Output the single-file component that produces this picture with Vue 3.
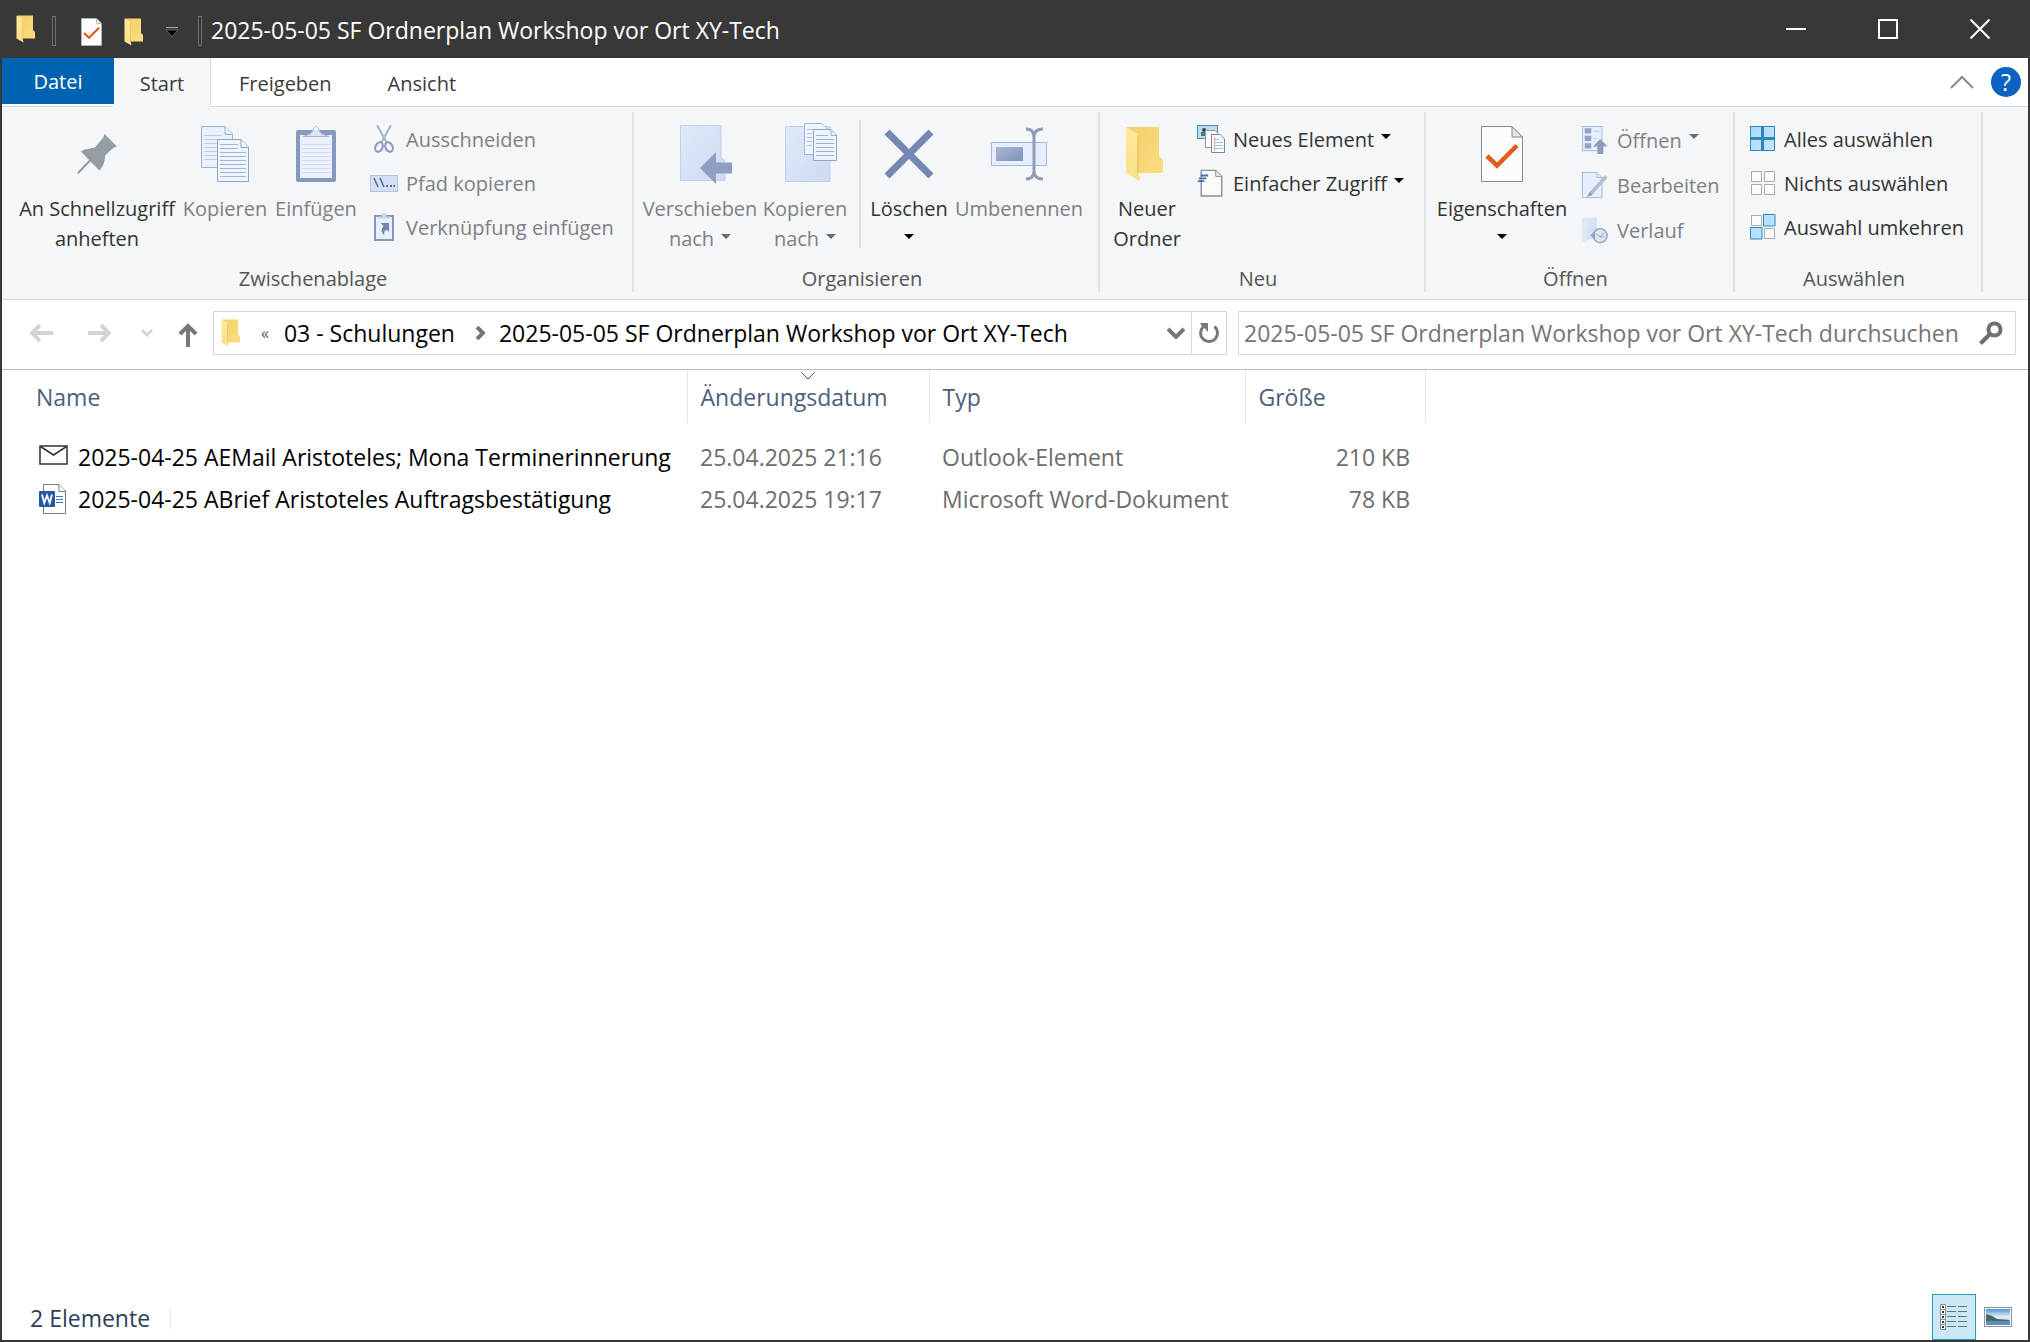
<script setup>
import { ref } from 'vue'

const folderTitle = '2025-05-05 SF Ordnerplan Workshop vor Ort XY-Tech'
const query = ref('')

const tabs = ['Start', 'Freigeben', 'Ansicht']

const groups = [
  {
    name: 'Zwischenablage',
    key: 'clipboard',
    big: [
      { lines: ['An Schnellzugriff', 'anheften'], icon: 'pin', key: 'pin' },
      { lines: ['Kopieren'], icon: 'copy', key: 'copy', off: true },
      { lines: ['Einfügen'], icon: 'paste', key: 'paste', off: true },
    ],
    small: [
      { text: 'Ausschneiden', icon: 'cut', off: true },
      { text: 'Pfad kopieren', icon: 'path', off: true },
      { text: 'Verknüpfung einfügen', icon: 'link', off: true },
    ],
  },
  {
    name: 'Organisieren',
    key: 'organize',
    big: [
      { lines: ['Verschieben', 'nach'], icon: 'move', key: 'move', off: true, menu: true },
      { lines: ['Kopieren', 'nach'], icon: 'copyto', key: 'copyto', off: true, menu: true },
      { lines: ['Löschen', ''], icon: 'delete', key: 'delete', menu: true, split: true },
      { lines: ['Umbenennen'], icon: 'rename', key: 'rename', off: true },
    ],
    small: [],
  },
  {
    name: 'Neu',
    key: 'new',
    big: [{ lines: ['Neuer', 'Ordner'], icon: 'folder', key: 'folder' }],
    small: [
      { text: 'Neues Element', icon: 'newitem', menu: true },
      { text: 'Einfacher Zugriff', icon: 'easy', menu: true },
    ],
  },
  {
    name: 'Öffnen',
    key: 'open',
    big: [{ lines: ['Eigenschaften', ''], icon: 'props', key: 'props', menu: true }],
    small: [
      { text: 'Öffnen', icon: 'openitem', off: true, menu: true },
      { text: 'Bearbeiten', icon: 'edit', off: true },
      { text: 'Verlauf', icon: 'history', off: true },
    ],
  },
  {
    name: 'Auswählen',
    key: 'select',
    big: [],
    small: [
      { text: 'Alles auswählen', icon: 'selall' },
      { text: 'Nichts auswählen', icon: 'selnone' },
      { text: 'Auswahl umkehren', icon: 'selinv' },
    ],
  },
]

const files = [
  { name: '2025-04-25 AEMail Aristoteles; Mona Terminerinnerung', date: '25.04.2025 21:16', type: 'Outlook-Element', size: '210 KB', icon: 'mail' },
  { name: '2025-04-25 ABrief Aristoteles Auftragsbestätigung', date: '25.04.2025 19:17', type: 'Microsoft Word-Dokument', size: '78 KB', icon: 'word' },
]
</script>

<template>
  <div class="window">
    <svg class="sprite" aria-hidden="true">
      <defs>
        <linearGradient id="gFolder" x1="0" x2="1" y1="0" y2="1">
          <stop offset="0" stop-color="#f3cf6b" /><stop offset="1" stop-color="#fbdc7e" />
        </linearGradient>
        <linearGradient id="gFlap" x1="0" x2="0" y1="0" y2="1">
          <stop offset="0" stop-color="#ffe9a0" /><stop offset="1" stop-color="#fbdf86" />
        </linearGradient>
        <linearGradient id="gPale" x1="0" x2="1" y1="0" y2="1">
          <stop offset="0" stop-color="#dfe9fa" /><stop offset="1" stop-color="#ccdaf1" />
        </linearGradient>
        <linearGradient id="gSteel" x1="0" x2="1" y1="0" y2="1">
          <stop offset="0" stop-color="#a9b8d3" /><stop offset="1" stop-color="#7f92b9" />
        </linearGradient>
        <linearGradient id="gBlue" x1="0" x2="1" y1="0" y2="1">
          <stop offset="0" stop-color="#a9dcfb" /><stop offset="1" stop-color="#c2e6fd" />
        </linearGradient>
        <linearGradient id="gSky" x1="0" x2="0" y1="0" y2="1">
          <stop offset="0" stop-color="#4f94d8" /><stop offset=".5" stop-color="#e4f1fb" /><stop offset="1" stop-color="#6fa5c8" />
        </linearGradient>
      </defs>
      <symbol id="i-folder" viewBox="0 0 38 56">
        <path d="M1 1H33V30L37 34V47H12Z" fill="url(#gFolder)" />
        <path d="M0 1L12 8V44L14 55L0 47Z" fill="url(#gFlap)" />
        <path d="M12 9V47" stroke="#e0b850" />
      </symbol>
      <symbol id="i-props" viewBox="0 0 42 56">
        <path d="M.5 .5H31L41.500 11V55.500H.5Z" fill="#fcfcfc" stroke="#8a8a8a" />
        <path d="M31 .5V11H41.500Z" fill="#e6e6e6" stroke="#8a8a8a" />
        <path d="M6 30L16 39.500L36 19.500" fill="none" stroke="#e25d1a" stroke-width="4.500" />
      </symbol>
      <symbol id="i-pin" viewBox="0 0 42 42">
        <path d="M28.500 1L41 13.500L38 14.500C35 17 31 20 29 23C29 28 27 34 23.500 37.500L14.500 28.500L3 40.500Q1 41.500 1.500 39L13 27L5 18.500C9 15.500 14 16 19 14.500C22 11 25 7 27 5Z" fill="#929da5" />
      </symbol>
      <symbol id="i-copy" viewBox="0 0 50 58">
        <g fill="#eaf1fc" stroke="#9db3d6">
          <path d="M1.500 1.500H25L32.500 9V42.500H1.500Z" /><path d="M25 1.500V9.500H32.500" />
        </g>
        <path d="M4 10.500H22M4 14.500H28M4 18.500H18M4 22.500H18M4 26.500H18M4 30.500H18M4 34.500H18" stroke="#bdcde6" />
        <g fill="#eef4fd" stroke="#8ea6cd">
          <path d="M17.500 14.500H41L48.500 22V56.500H17.500Z" /><path d="M41 14.500V22.500H48.500" />
        </g>
        <path d="M20 19.500H38M20 23.500H38M20 27.500H46M20 31.500H46M20 35.500H46M20 39.500H46M20 43.500H46M20 47.500H46M20 51.500H46" stroke="#a3b6d6" />
      </symbol>
      <symbol id="i-paste" viewBox="0 0 42 58">
        <rect x="1" y="5" width="40" height="52" rx="2" fill="#8598bd" />
        <rect x="5" y="10" width="32" height="43" fill="#eaf1fc" />
        <path d="M8 19.500H34M8 23.500H34M8 27.500H34M8 31.500H34M8 35.500H34M8 39.500H34M8 43.500H34M8 47.500H34" stroke="#d0dcee" />
        <path d="M8 11.500Q17 9 18 5Q21-2 24 5Q25 9 34 11.500Z" fill="#dbe4f2" stroke="#a9b6cd" />
        <circle cx="21" cy="3.500" r="1.500" fill="#fff" />
      </symbol>
      <symbol id="i-cut" viewBox="0 0 28 28">
        <path d="M7 0L17 18M21 0L11 18" stroke="#a5b5d0" stroke-width="2" />
        <ellipse cx="9" cy="22" rx="3.500" ry="5" transform="rotate(25 9 22)" fill="none" stroke="#8598bd" stroke-width="2" />
        <ellipse cx="19" cy="22" rx="3.500" ry="5" transform="rotate(-25 19 22)" fill="none" stroke="#8598bd" stroke-width="2" />
      </symbol>
      <symbol id="i-path" viewBox="0 0 28 28">
        <rect x=".5" y="6.500" width="27" height="16" fill="#d3e0f4" stroke="#b4c4e0" />
        <path d="M4 9L8 18M10 9L14 18" stroke="#55688c" stroke-width="1.500" />
        <path d="M16 17H18M20 17H22M23.500 17H25" stroke="#55688c" stroke-width="2" />
      </symbol>
      <symbol id="i-link" viewBox="0 0 28 28">
        <rect x="5" y="3" width="18" height="24" fill="#e8f0fc" stroke="#8598bd" stroke-width="2" />
        <path d="M8 5.500V3.500H12V.5H16V3.500H20V5.500Z" fill="#c9d4e6" />
        <path d="M19 10V19L16.500 16.500Q13 18.500 14.500 22.500Q9 18 13.500 13L10.500 10Z" fill="#7287b0" />
      </symbol>
      <symbol id="i-move" viewBox="0 0 52 62">
        <path d="M.5 2.500H41V34L45 38V57.500H.5Z" fill="url(#gPale)" stroke="#c3d0e8" />
        <path d="M20 45L36 29V39.500H52V50.500H36V61Z" fill="#8f9fc2" />
      </symbol>
      <symbol id="i-copyto" viewBox="0 0 52 62">
        <path d="M.5 3.500H45V58.500H.5Z" fill="url(#gPale)" stroke="#c3d0e8" />
        <path d="M19.500 .5H37L42.500 6V31.500H19.500Z" fill="#eef4fd" stroke="#a5b8d8" />
        <path d="M22 6.500H34M22 10.500H27M22 14.500H27M22 18.500H27M22 22.500H27" stroke="#b3c3de" />
        <path d="M28.500 6.500H46L51.500 12V37.500H28.500Z" fill="#eef4fd" stroke="#8ea6cd" />
        <path d="M46 6.500V12.500H51.500M31 12.500H43M31 16.500H49M31 20.500H49M31 24.500H49M31 28.500H49M31 32.500H49" fill="none" stroke="#9db1d3" />
      </symbol>
      <symbol id="i-delete" viewBox="0 0 50 50">
        <path d="M3 3L47 47M47 3L3 47" stroke="#7488b3" stroke-width="7" />
      </symbol>
      <symbol id="i-rename" viewBox="0 0 58 56">
        <rect x="1.500" y="16.500" width="55" height="23" fill="#e4eefc" stroke="#a6b8d8" />
        <rect x="6" y="21" width="27" height="14" fill="url(#gSteel)" />
        <path d="M36 3Q44 3 44 11V45Q44 53 36 53M53 3Q44 3 44 11M53 53Q44 53 44 45" fill="none" stroke="#909db5" stroke-width="3" />
      </symbol>
      <symbol id="i-newitem" viewBox="0 0 28 28">
        <rect x=".5" y=".5" width="20" height="13" fill="#b7def5" stroke="#4b8db8" />
        <circle cx="7" cy="5" r="2" fill="#3b4a4c" /><rect x="4" y="7" width="6" height="4" fill="#5d7a68" />
        <path d="M8.500 5.500H18L21.500 9V22.500H8.500Z" fill="#fdfdfd" stroke="#8f9499" />
        <path d="M14.500 9.500H23L27.500 14V27.500H14.500Z" fill="#fff" stroke="#7f858b" />
        <path d="M17 14.500H22M17 17.500H26M17 20.500H26M17 23.500H26" stroke="#9cc3e2" /><path d="M17.500 12V26" stroke="#e0a3a8" />
      </symbol>
      <symbol id="i-easy" viewBox="0 0 28 30">
        <path d="M3.500 1.500H19L25.500 8V29H3.500Z" fill="#fbfbfb" stroke="#8b9096" stroke-width="1.500" />
        <path d="M19 1.500V8H25.500" fill="#e5e5e5" stroke="#8b9096" />
        <path d="M3 7H11M1 10H9M0 13H7" stroke="#3b76b0" stroke-width="2" />
      </symbol>
      <symbol id="i-openitem" viewBox="0 0 28 30">
        <rect x=".5" y=".5" width="21" height="26" fill="#e4eefc" stroke="#a6b8d8" />
        <path d="M3 2.500H10V8H3ZM3 10.500H10V16H3ZM3 18.500H10V24H3Z" fill="#93a4c6" />
        <path d="M12 5.500H19M12 13.500H16" stroke="#bccbe4" />
        <path d="M19.500 14L27.500 22H23V30H16.500V22H12Z" fill="#8b9cbf" />
      </symbol>
      <symbol id="i-edit" viewBox="0 0 28 30">
        <path d="M.5 1.500H16L21.500 7V28.500H.5Z" fill="#e6effc" stroke="#a6b8d8" /><path d="M16 1.500V7H21.500" fill="none" stroke="#a6b8d8" />
        <path d="M26 6L8 26" stroke="#b2bfd5" stroke-width="4" /><path d="M9 22L5 28L11 25.500Z" fill="#8b9cbf" />
      </symbol>
      <symbol id="i-history" viewBox="0 0 28 30">
        <path d="M0 2H16V25H8L0 28Z" fill="url(#gPale)" /><path d="M0 2L5 5V29L0 26Z" fill="#dce7f8" />
        <circle cx="19.500" cy="21" r="7.500" fill="#dbe5f4" stroke="#8fa0c2" stroke-width="1.500" />
        <path d="M15 19L19.500 22L24 18M19 22.500H24" fill="none" stroke="#8fa0c2" /><path d="M9 21L14 17V25Z" fill="#8fa0c2" />
      </symbol>
      <symbol id="i-selall" viewBox="0 0 28 28">
        <rect x="2" y="1" width="25" height="25" fill="#2f86bd" />
        <path d="M3 2H13V12H3ZM16 2H26V12H16ZM3 15H13V25H3ZM16 15H26V25H16Z" fill="url(#gBlue)" />
      </symbol>
      <symbol id="i-selnone" viewBox="0 0 28 28">
        <path d="M3.500 2.500H13.500V12.500H3.500ZM16.500 2.500H26.500V12.500H16.500ZM3.500 15.500H13.500V25.500H3.500ZM16.500 15.500H26.500V25.500H16.500Z" fill="#fcfcfc" stroke="#ababab" />
      </symbol>
      <symbol id="i-selinv" viewBox="0 0 28 28">
        <path d="M3.500 2.500H13.500V12.500H3.500ZM16.500 15.500H26.500V25.500H16.500Z" fill="#fcfcfc" stroke="#ababab" />
        <path d="M15.500 1.500H27V13H15.500ZM2.500 14.500H14V26H2.500Z" fill="url(#gBlue)" stroke="#2f86bd" />
      </symbol>
      <symbol id="i-mail" viewBox="0 0 30 30">
        <rect x="1" y="4" width="27" height="18" fill="#fff" stroke="#333" stroke-width="1.500" />
        <path d="M1.500 4.500L14.500 13L27.500 4.500" fill="none" stroke="#333" stroke-width="1.500" />
      </symbol>
      <symbol id="i-word" viewBox="0 0 30 30">
        <path d="M4.500 .5H20L26.500 7V29.500H4.500Z" fill="#fff" stroke="#7d7d7d" />
        <path d="M20 .5V7.500H26.500" fill="#fff" stroke="#6b8468" />
        <path d="M17 12.500H24M17 15.500H24M17 18.500H24" stroke="#3f78bd" />
        <rect x="0" y="7" width="16" height="16" rx="1" fill="#2457a4" />
        <path d="M3 10.500L5.300 19L8 11.500L10.700 19L13 10.500" fill="none" stroke="#fff" stroke-width="1.800" />
      </symbol>
    </svg>

    <header class="titlebar">
      <svg class="folder-icon app"><use href="#i-folder" /></svg>
      <span class="bar"></span>
      <button class="quick doc" aria-label="Eigenschaften"><svg><use href="#i-props" /></svg></button>
      <button class="quick" aria-label="Neuer Ordner"><svg class="folder-icon"><use href="#i-folder" /></svg></button>
      <button class="quick more" aria-label="Anpassen">
        <svg viewBox="0 0 12 10"><path d="M0 .5H12" stroke="#aaa" /><path d="M0 3H12L6 9.500Z" fill="#000" stroke="#aaa" stroke-width=".5" /></svg>
      </button>
      <span class="bar"></span>
      <h1>{{ folderTitle }}</h1>
      <div class="controls">
        <button aria-label="Minimieren"><svg viewBox="0 0 20 20"><path d="M0 10H20" /></svg></button>
        <button aria-label="Maximieren"><svg viewBox="0 0 20 20"><path d="M1 1H19V19H1Z" /></svg></button>
        <button aria-label="Schließen"><svg viewBox="0 0 20 20"><path d="M.5 .5L19.500 19.500M19.500 .5L.5 19.500" /></svg></button>
      </div>
    </header>

    <nav class="tabs">
      <button class="file-tab">Datei</button>
      <button v-for="(t, i) in tabs" :key="t" class="tab" :class="{ active: i === 0 }">{{ t }}</button>
      <span class="spacer"></span>
      <button class="collapse" aria-label="Menüband minimieren"><svg viewBox="0 0 24 14"><path d="M1 13L12 2L23 13" /></svg></button>
      <button class="help" aria-label="Hilfe">?</button>
    </nav>

    <section class="ribbon">
      <div v-for="g in groups" :key="g.key" class="group" :class="'g-' + g.key">
        <div class="commands">
          <template v-for="b in g.big" :key="b.key">
            <span v-if="b.split" class="split"></span>
            <button class="big" :class="['b-' + b.key, { off: b.off }]">
              <span class="pic"><svg><use :href="'#i-' + b.icon" /></svg></span>
              <span>{{ b.lines[0] }}</span>
              <span v-if="b.lines.length > 1" class="second">{{ b.lines[1] }}<i v-if="b.menu" class="caret"></i></span>
            </button>
          </template>
          <div v-if="g.small.length" class="column">
            <button v-for="s in g.small" :key="s.text" class="small" :class="{ off: s.off }">
              <svg><use :href="'#i-' + s.icon" /></svg>
              <span>{{ s.text }}</span>
              <i v-if="s.menu" class="caret"></i>
            </button>
          </div>
        </div>
        <div class="caption">{{ g.name }}</div>
      </div>
    </section>

    <section class="navbar">
      <div class="history">
        <button aria-label="Zurück"><svg class="arrow" viewBox="0 0 24 20"><path d="M23 10H3M10 2L2 10L10 18" /></svg></button>
        <button aria-label="Vorwärts"><svg class="arrow" viewBox="0 0 24 20"><path d="M1 10H21M14 2L22 10L14 18" /></svg></button>
        <button class="recent" aria-label="Zuletzt besucht"><svg viewBox="0 0 12 8"><path d="M1 1L6 6L11 1" /></svg></button>
        <button class="up" aria-label="Nach oben"><svg viewBox="0 0 20 24"><path d="M10 24V4M2 11L10 3L18 11" /></svg></button>
      </div>
      <div class="address">
        <svg class="folder-icon"><use href="#i-folder" /></svg>
        <button class="crumb-more">«</button>
        <button>03 - Schulungen</button>
        <svg class="sep" viewBox="0 0 10 14"><path d="M2 1L8 7L2 13" /></svg>
        <button>{{ folderTitle }}</button>
        <span class="spacer"></span>
        <button class="drop" aria-label="Vorherige Orte"><svg viewBox="0 0 18 12"><path d="M1 2L9 10L17 2" /></svg></button>
        <button class="refresh" aria-label="Aktualisieren">
          <svg viewBox="0 0 22 22"><path d="M16.500 4.500A8.500 8.500 0 1 1 5 5" fill="none" stroke="#777" stroke-width="3" /><path d="M2 1H10V10L7.500 7L4 4.500Z" fill="#777" /></svg>
        </button>
      </div>
      <label class="search">
        <input v-model="query" type="text" :placeholder="folderTitle + ' durchsuchen'" aria-label="Ordner durchsuchen" />
        <svg viewBox="0 0 24 24"><circle cx="15.500" cy="8.500" r="6" /><path d="M11 13L1.500 22.500" /></svg>
      </label>
    </section>

    <main class="content">
      <table>
        <colgroup><col class="c-name" /><col class="c-date" /><col class="c-type" /><col class="c-size" /><col /></colgroup>
        <thead>
          <tr>
            <th class="name">Name</th>
            <th>Änderungsdatum<svg class="sort" viewBox="0 0 14 8"><path d="M.5 .5L7 7L13.500 .5" /></svg></th>
            <th>Typ</th>
            <th>Größe</th>
            <th class="rest"></th>
          </tr>
        </thead>
        <tbody>
          <tr v-for="f in files" :key="f.name">
            <td class="name"><div><svg><use :href="'#i-' + f.icon" /></svg>{{ f.name }}</div></td>
            <td>{{ f.date }}</td>
            <td>{{ f.type }}</td>
            <td class="size">{{ f.size }}</td>
            <td class="rest"></td>
          </tr>
        </tbody>
      </table>
    </main>

    <footer class="status">
      <span class="count">{{ files.length }} Elemente</span>
      <span class="spacer"></span>
      <button class="view active" aria-label="Details">
        <svg viewBox="0 0 28 28">
          <path d="M.5 1.500H5.500V26.500H.5ZM.5 6.500H5.500M.5 11.500H5.500M.5 16.500H5.500M.5 21.500H5.500" fill="#fff" stroke="#8b8b8b" />
          <path d="M2 4H4M2 9H4M2 14H4M2 19H4M2 24H4" stroke="#333" stroke-width="2" />
          <path d="M7 3.500H16M18 3.500H27M7 8.500H16M18 8.500H27M7 13.500H16M18 13.500H27M7 18.500H16M18 18.500H27M7 23.500H16M18 23.500H27" stroke="#5f7483" />
        </svg>
      </button>
      <button class="view" aria-label="Große Symbole">
        <svg viewBox="0 0 28 22">
          <rect x=".5" y="1.500" width="27" height="19" fill="#fff" stroke="#8790a0" />
          <rect x="2" y="3" width="24" height="16" fill="url(#gSky)" />
          <path d="M2 8Q8 9 13 13L25 14L26 15H2Z" fill="#3d6b62" /><path d="M2 15H26V19H2Z" fill="#5b8fb5" />
        </svg>
      </button>
    </footer>
  </div>
</template>

<style>
body {
  margin: 0;
}
</style>

<style scoped>
.window {
  box-sizing: border-box;
  min-height: 100vh;
  display: flex;
  flex-direction: column;
  border: solid #383838;
  border-width: 0 2px 2px;
  background: #fff;
  color: #000;
  font: 23px/30px "Open Sans", "Noto Sans", sans-serif;
  white-space: nowrap;
}
.sprite {
  position: absolute;
  width: 0;
  height: 0;
}
button {
  font: inherit;
  color: inherit;
  background: none;
  border: 0;
  padding: 0;
  margin: 0;
}
svg {
  display: block;
  flex: none;
}
.spacer {
  flex: 1;
}
.folder-icon {
  width: 20px;
  height: 28px;
}

.titlebar {
  display: flex;
  align-items: center;
  height: 58px;
  padding: 0 2px 0 14px;
  background: #383838;
  color: #fff;
}
.bar {
  box-sizing: border-box;
  width: 4px;
  height: 30px;
  margin: 4px 0 0 16px;
  border: 1px solid #6e6e6e;
}
.quick {
  margin: 6px 0 0 22px;
}
.quick.doc {
  margin-left: 25px;
}
.doc svg {
  width: 21px;
  height: 28px;
}
.more svg {
  width: 12px;
  height: 10px;
}
.more + .bar {
  margin-left: 20px;
}
h1 {
  margin: 2px 0 0 9px;
  font-size: 23px;
  font-weight: 400;
}
.controls {
  display: flex;
  align-self: stretch;
  margin-left: auto;
}
.controls button {
  display: grid;
  place-items: center;
  width: 92px;
}
.controls svg {
  width: 20px;
  height: 20px;
  fill: none;
  stroke: #fff;
  stroke-width: 2;
}

.tabs {
  display: flex;
  align-items: center;
  height: 48px;
  border-bottom: 1px solid #d9dadc;
  font-size: 20px;
  color: #3b3b3b;
}
.tabs button {
  align-self: stretch;
}
.file-tab {
  width: 112px;
  margin-bottom: 2px;
  padding-top: 2px;
  background: #0063b1;
  color: #fff;
}
.tab {
  padding: 3px 28px 0;
}
.tab.active {
  box-sizing: border-box;
  width: 97px;
  margin-bottom: -1px;
  padding: 2px 0 0;
  background: #f5f6f7;
  border-right: 1px solid #d9dadc;
}
.tabs .collapse {
  margin-right: 17px;
}
.collapse svg {
  width: 24px;
  height: 14px;
  fill: none;
  stroke: #8a8a8a;
  stroke-width: 2;
}
.tabs .help {
  align-self: center;
  width: 30px;
  height: 30px;
  margin-right: 7px;
  border-radius: 50%;
  background: #0a63c0;
  color: #fff;
  font-size: 23px;
}

.ribbon {
  display: flex;
  padding: 5px 0 7px;
  background: #f5f6f7;
  border-bottom: 1px solid #d9dadc;
  font-size: 20px;
  color: #333;
}
.group {
  box-sizing: border-box;
  display: flex;
  flex-direction: column;
  height: 180px;
  border-right: 2px solid #e1e2e4;
}
.g-clipboard { width: 632px; }
.g-organize { width: 466px; }
.g-new { width: 326px; }
.g-open { width: 309px; }
.g-select { width: 248px; }
.commands {
  display: flex;
  flex: 1;
  padding-left: 5px;
}
.g-clipboard .commands {
  padding-left: 12px;
}
.g-organize .commands {
  padding-left: 9px;
}
.caption {
  height: 28px;
  padding-right: 8px;
  line-height: 30px;
  text-align: center;
  color: #555;
}
.off {
  color: #7f8083;
}
.big {
  display: flex;
  flex-direction: column;
  align-items: center;
  padding-top: 6px;
}
.pic {
  display: grid;
  place-items: center;
  height: 72px;
  margin-bottom: 4px;
}
.second {
  display: flex;
  align-items: center;
  gap: 7px;
  min-height: 30px;
}
.caret {
  flex: none;
  width: 0;
  height: 0;
  margin-bottom: 6px;
  border: solid transparent;
  border-width: 5px 5px 0;
  border-top-color: #000;
}
.off .caret {
  border-top-color: #6a6b6e;
}
.b-pin { width: 166px; }
.b-copy { width: 90px; }
.b-paste { width: 92px; }
.b-move { width: 114px; }
.b-copyto { width: 96px; }
.b-delete { width: 92px; }
.b-rename { width: 128px; }
.b-folder { width: 84px; }
.b-props { width: 142px; }
.b-move .pic,
.b-copyto .pic {
  padding-left: 12px;
}
.b-folder .pic {
  padding-right: 4px;
}
.b-pin svg { width: 42px; height: 42px; }
.b-copy svg { width: 50px; height: 58px; }
.b-paste svg { width: 42px; height: 58px; }
.b-move svg,
.b-copyto svg { width: 52px; height: 62px; }
.b-delete svg { width: 50px; height: 50px; }
.b-rename svg { width: 58px; height: 56px; }
.b-folder svg { width: 38px; height: 56px; }
.b-props svg { width: 42px; height: 56px; }
.split {
  width: 2px;
  height: 128px;
  margin: 8px 2px 0 6px;
  background: #dcdddf;
}
.column {
  display: flex;
  flex-direction: column;
  margin-left: 8px;
  padding-top: 5px;
}
.small {
  display: flex;
  align-items: center;
  height: 44px;
}
.g-open .small {
  height: 45px;
}
.small svg {
  width: 28px;
  height: 28px;
  margin-right: 8px;
}
.small span {
  padding-top: 2px;
}
.small .caret {
  margin-left: 7px;
}

.navbar {
  display: flex;
  align-items: center;
  height: 66px;
  padding: 0 12px 3px 28px;
  border-bottom: 1px solid #bcbcbc;
}
.history {
  display: flex;
  align-items: center;
  width: 183px;
}
.history svg,
.address .sep,
.drop svg {
  fill: none;
  stroke: #d4d4d4;
  stroke-width: 3;
}
.arrow {
  width: 24px;
  height: 20px;
}
.history button + button {
  margin-left: 33px;
}
.history .arrow {
  stroke-width: 4;
}
.history button + .recent {
  margin-left: 30px;
}
.history .recent svg {
  width: 12px;
  height: 8px;
}
.history .recent + .up {
  margin: 4px 0 0 25px;
}
.history .up svg {
  width: 20px;
  height: 24px;
  stroke: #777;
  stroke-width: 4;
}
.address,
.search {
  box-sizing: border-box;
  display: flex;
  align-items: center;
  height: 44px;
  border: 1px solid #d9d9d9;
}
.address {
  flex: 1005;
  padding-left: 7px;
}
.crumb-more {
  margin: 0 15px 0 20px;
  font-size: 16px;
  color: #555;
}
.address .sep {
  width: 10px;
  height: 14px;
  margin: 0 14px 0 20px;
  stroke: #777;
  stroke-width: 4;
}
.drop {
  margin-right: 6px;
}
.drop svg {
  width: 18px;
  height: 12px;
  stroke: #777;
  stroke-width: 4;
}
.refresh {
  align-self: stretch;
  width: 35px;
  padding-left: 6px;
  border-left: 1px solid #d9d9d9;
}
.refresh svg {
  width: 22px;
  height: 22px;
}
.search {
  flex: 759;
  margin-left: 11px;
  padding: 0 12px 0 5px;
}
.search input {
  flex: 1;
  min-width: 0;
  padding: 0;
  border: 0;
  outline: 0;
  background: none;
  font: inherit;
}
.search input::placeholder {
  color: #757575;
  opacity: 1;
}
.search svg {
  width: 24px;
  height: 24px;
  fill: none;
  stroke: #6f6f6f;
  stroke-width: 4;
}

.content {
  flex: 1;
}
table {
  width: 100%;
  table-layout: fixed;
  border-collapse: collapse;
}
.c-name { width: 685px; }
.c-date { width: 242px; }
.c-type { width: 316px; }
.c-size { width: 180px; }
th {
  position: relative;
  height: 53px;
  padding: 0 0 0 13px;
  box-sizing: border-box;
  border-right: 1px solid #e5e5e5;
  font-weight: 400;
  text-align: left;
  color: #4c607a;
}
th.name {
  padding-left: 34px;
}
th.rest {
  border: 0;
}
.sort {
  position: absolute;
  top: 2px;
  left: calc(50% - 7px);
  width: 14px;
  height: 8px;
  fill: none;
  stroke: #555;
}
tbody::before {
  content: "";
  display: block;
  height: 13px;
}
td {
  height: 42px;
  padding: 0 0 0 13px;
  color: #6d6d6d;
}
td.name {
  padding-left: 37px;
  color: #000;
}
td.name div {
  display: flex;
  align-items: center;
}
td.name svg {
  width: 30px;
  height: 30px;
  margin-right: 9px;
}
td.size {
  padding-right: 15px;
  text-align: right;
}

.status {
  display: flex;
  align-items: flex-end;
  height: 46px;
  padding-right: 8px;
  color: #2b3f5c;
}
.count {
  margin-bottom: 11px;
  padding: 0 20px 0 28px;
  line-height: 22px;
  border-right: 1px solid #ececec;
}
.view {
  box-sizing: border-box;
  display: grid;
  place-items: center;
  width: 44px;
  height: 46px;
  border: 1px solid transparent;
}
.view.active {
  background: #cce8f4;
  border-color: #26a0b5;
}
.view svg {
  width: 28px;
  height: 28px;
}
</style>
